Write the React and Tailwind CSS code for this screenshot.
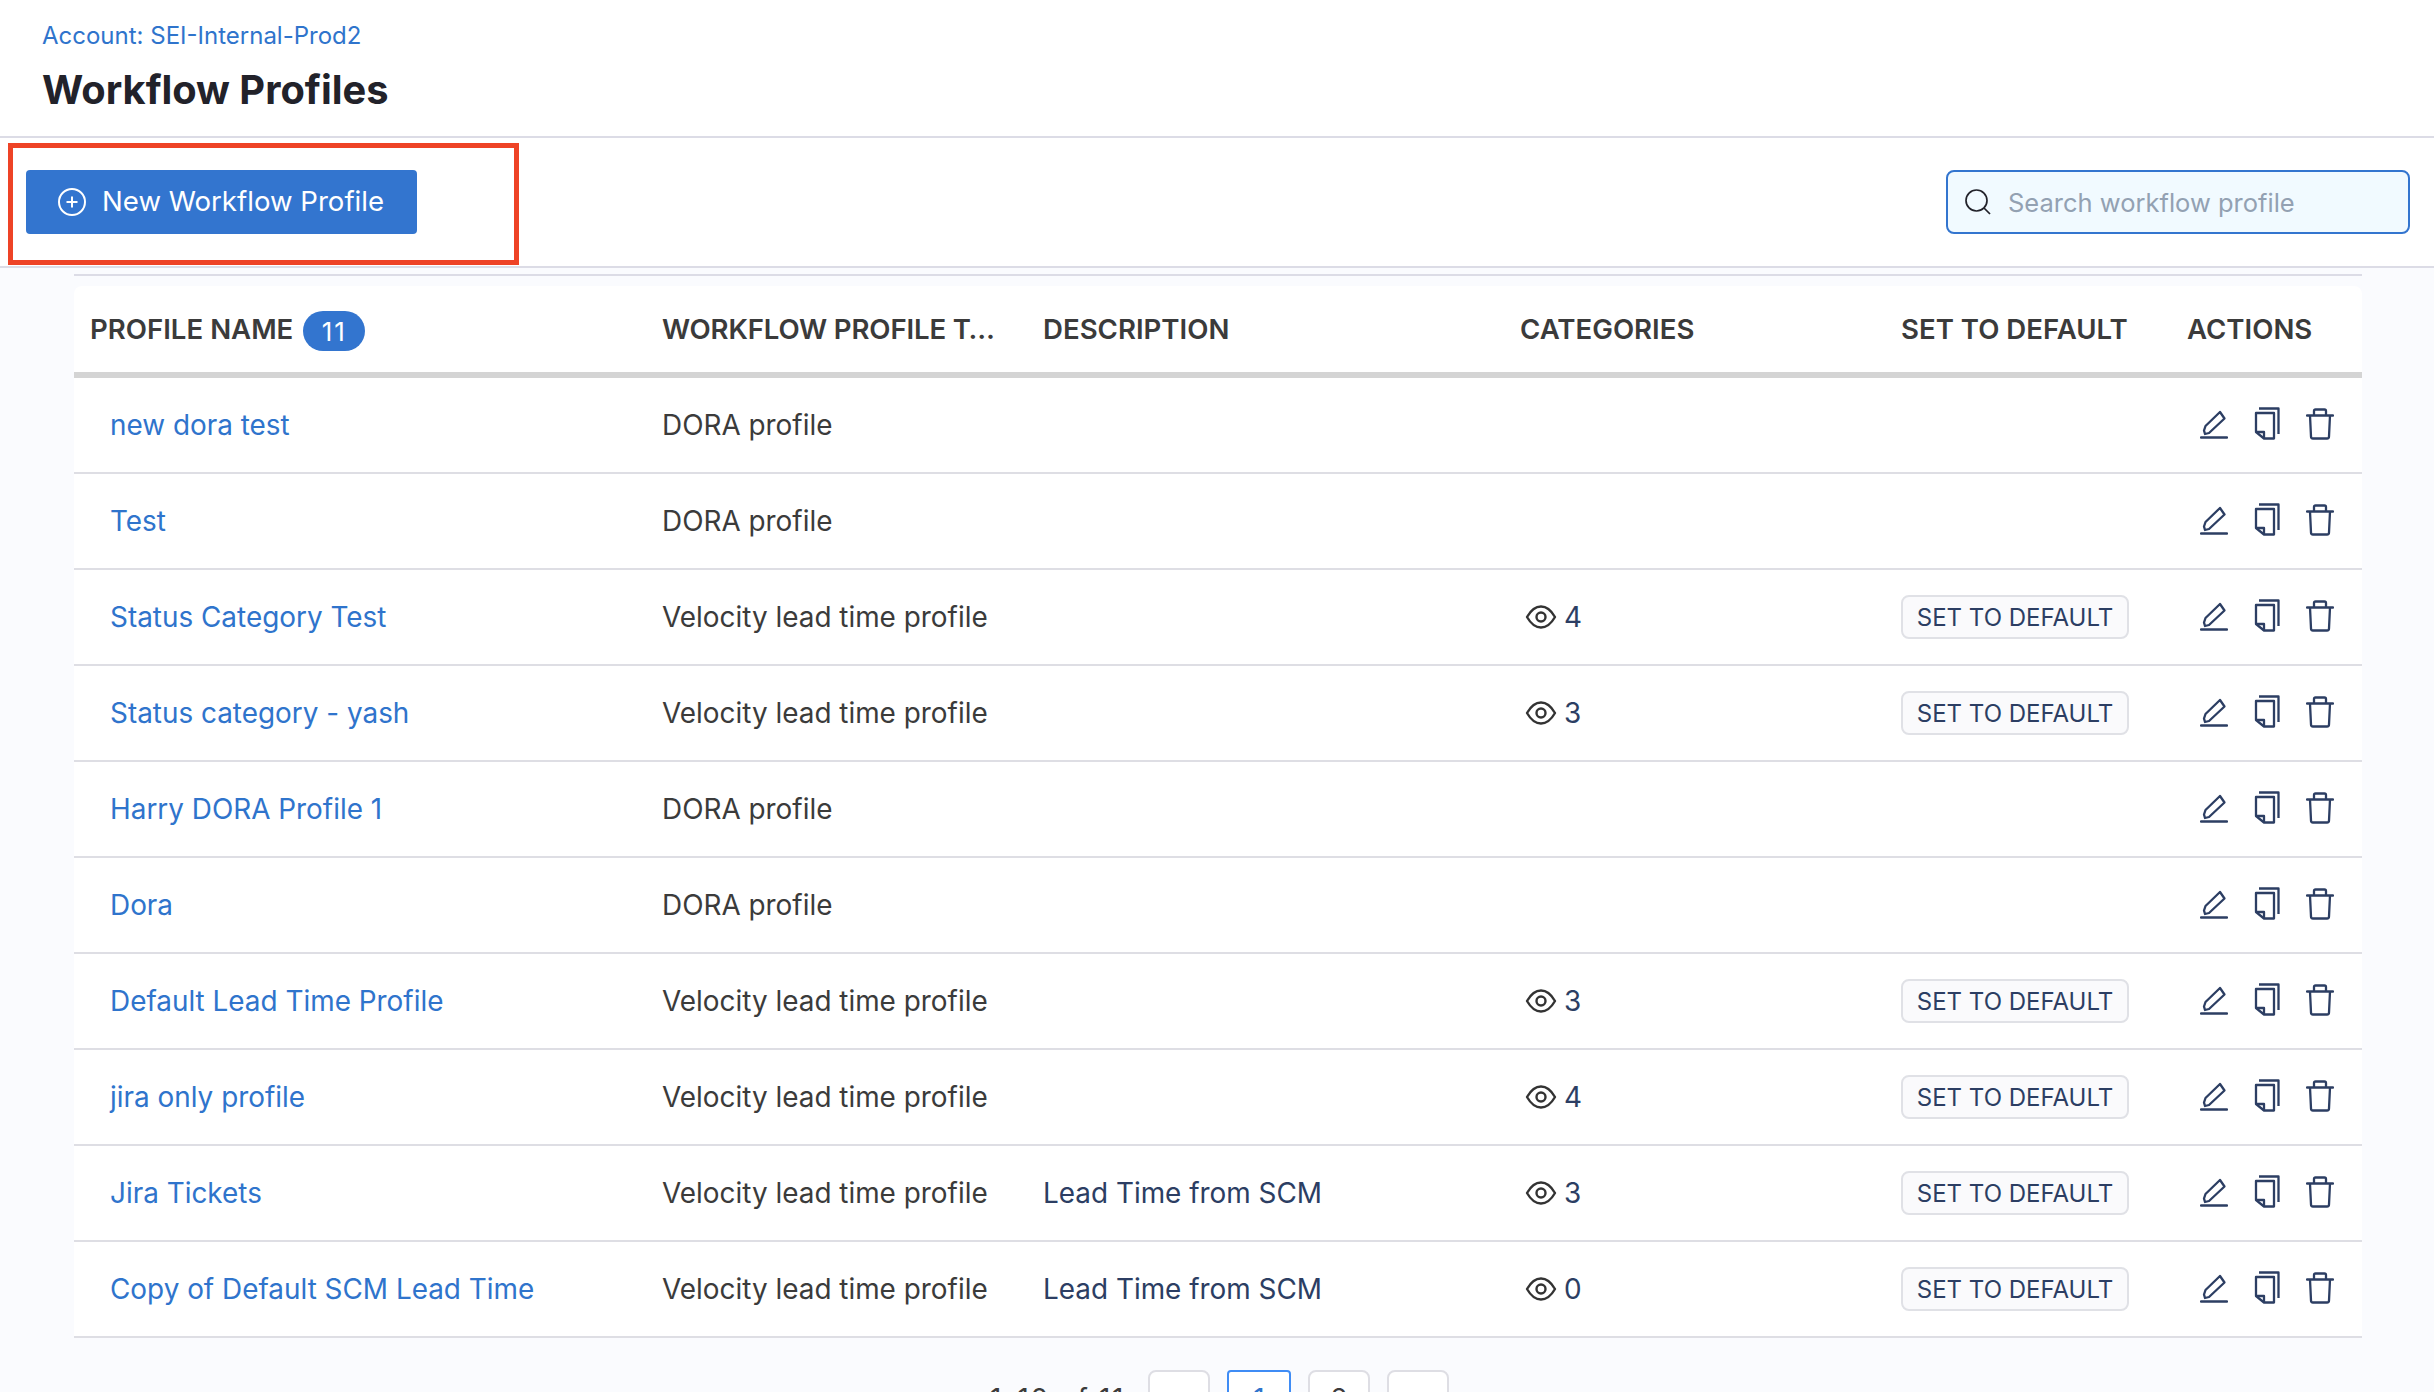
import React from 'react';

const rows = [
  { name: 'new dora test', type: 'DORA profile' },
  { name: 'Test', type: 'DORA profile' },
  { name: 'Status Category Test', type: 'Velocity lead time profile', cat: 4 },
  { name: 'Status category - yash', type: 'Velocity lead time profile', cat: 3 },
  { name: 'Harry DORA Profile 1', type: 'DORA profile' },
  { name: 'Dora', type: 'DORA profile' },
  { name: 'Default Lead Time Profile', type: 'Velocity lead time profile', cat: 3 },
  { name: 'jira only profile', type: 'Velocity lead time profile', cat: 4 },
  { name: 'Jira Tickets', type: 'Velocity lead time profile', desc: 'Lead Time from SCM', cat: 3 },
  { name: 'Copy of Default SCM Lead Time', type: 'Velocity lead time profile', desc: 'Lead Time from SCM', cat: 0 },
];

const cols = 'grid grid-cols-[572px_381px_477px_381px_286px_191px] items-center';

function PlusCircle() {
  return (
    <svg width="30" height="30" viewBox="0 0 30 30" fill="none" stroke="white" strokeWidth="2" className="shrink-0">
      <circle cx="15" cy="15" r="13" />
      <path d="M15 9.5v11M9.5 15h11" />
    </svg>
  );
}

function SearchIcon() {
  return (
    <svg width="28" height="28" viewBox="0 0 28 28" fill="none" stroke="#22222a" strokeWidth="1.7" className="shrink-0">
      <circle cx="12.5" cy="12.5" r="10.5" />
      <path d="M20 20l6 6" />
    </svg>
  );
}

function EyeIcon() {
  return (
    <svg width="32" height="26" viewBox="0 0 32 26" fill="none" stroke="#333333" strokeWidth="2.4" className="mb-[2px] shrink-0">
      <path d="M2 13C6 6 10.500 2.500 16 2.500S26 6 30 13c-4 7-8.500 10.500-14 10.500S6 20 2 13z" strokeLinejoin="round" />
      <circle cx="16" cy="13" r="4.500" />
    </svg>
  );
}

function EditIcon() {
  return (
    <svg width="28" height="30" viewBox="0 0 28 30" fill="none" stroke="#2c3e63" strokeWidth="2.3" strokeLinejoin="round">
      <path d="M4 21.500L5 25l4-1L24.500 9.500 20 3 5.500 17z" />
      <path d="M1 28.500h26" strokeLinecap="round" />
    </svg>
  );
}

function CopyIcon() {
  return (
    <svg width="26" height="34" viewBox="0 0 26 34" fill="none" stroke="#2c3e63" strokeWidth="2.3" strokeLinejoin="round">
      <path d="M5 1.500h19.500V27" />
      <path d="M10 31.500H20V6H2v19z" />
      <path d="M3 25h7v6.500" />
    </svg>
  );
}

function TrashIcon() {
  return (
    <svg width="28" height="32" viewBox="0 0 28 32" fill="none" stroke="#2c3e63" strokeWidth="2.3" strokeLinejoin="round">
      <path d="M1 7.500h26" strokeLinecap="round" />
      <path d="M4 7.500l1 21c0 1 1 2 2 2h14c1 0 2-1 2-2l1-21" />
      <path d="M8 7.500V3c0-1 .5-1.500 1.500-1.500h9c1 0 1.500.5 1.500 1.500v4.500" />
    </svg>
  );
}

function TableRow({ row }) {
  return (
    <div className={`${cols} h-[96px] border-b-2 border-[#dedee4] bg-white text-[27.900px] text-[#3b3b3b]`}>
      <div className="pt-[2px] pl-9 text-[#2f74cc]">{row.name}</div>
      <div className="pt-[2px] pl-4">{row.type}</div>
      <div className="pt-[2px] pl-4 text-[#2c3e63]">{row.desc}</div>
      <div className="pt-[2px] pl-[21px]">
        {row.cat !== undefined && (
          <div className="flex items-center gap-[7px] text-[#2c3e63]">
            <EyeIcon />
            <span>{row.cat}</span>
          </div>
        )}
      </div>
      <div className="pl-4">
        {row.cat !== undefined && (
          <button className="flex h-[44px] w-[228px] items-center justify-center rounded-lg border-2 border-[#e0e1e6] bg-[#fafafc] pt-[1px] text-[24px] text-[#2c3e63]">
            SET TO DEFAULT
          </button>
        )}
      </div>
      <div className="flex items-center gap-[26px] pb-[2px] pl-[29px]">
        <EditIcon />
        <CopyIcon />
        <TrashIcon />
      </div>
    </div>
  );
}

export default function App() {
  return (
    <div className="relative h-[1392px] overflow-hidden bg-[#fafbfe] font-['Inter',sans-serif]">
      <header className="h-[138px] border-b-2 border-[#dcdce6] bg-white px-[42px] pt-5">
        <div className="text-[24px] leading-[32px] text-[#2f74cc]">Account: SEI-Internal-Prod2</div>
        <h1 className="mt-[11px] text-[39.800px] leading-[54px] font-bold text-[#22222a]">Workflow Profiles</h1>
      </header>

      <div className="flex h-[130px] items-center justify-between border-b-2 border-[#dcdce6] bg-white pr-6 pl-[26px]">
        <button className="flex h-[64px] w-[391px] items-center gap-[15px] rounded bg-[#3375cf] pl-[31px] text-[27.600px] text-white">
          <PlusCircle />
          New Workflow Profile
        </button>
        <div className="flex h-[64px] w-[464px] items-center gap-4 rounded-lg border-2 border-[#3375cf] bg-[#f1faff] pl-4">
          <SearchIcon />
          <span className="pt-[2px] text-[25.500px] text-[#93a1b2]">Search workflow profile</span>
        </div>
      </div>

      <div className="absolute top-[143px] left-2 h-[122px] w-[511px] border-[5px] border-[#ee4326]" />

      <main className="mx-[74px] mt-[6px] w-[2288px]">
        <div className="h-[2px] bg-[#dcdce6]" />
        <div className={`${cols} mt-[10px] h-[92px] rounded-t-lg border-b-[6px] border-[#d4d4d4] bg-white text-[27.600px] font-semibold text-[#3b3b3b]`}>
          <div className="flex items-center gap-[10px] pt-[2px] pl-4">
            PROFILE NAME
            <span className="mt-[2px] flex h-10 w-[62px] items-center justify-center rounded-full bg-[#3375cf] text-[26px] font-normal tracking-[2px] text-white">11</span>
          </div>
          <div className="truncate pt-[2px] pl-4 tracking-[-0.15px]">WORKFLOW PROFILE T…</div>
          <div className="pt-[2px] pl-4">DESCRIPTION</div>
          <div className="pt-[2px] pl-4">CATEGORIES</div>
          <div className="pt-[2px] pl-4">SET TO DEFAULT</div>
          <div className="pt-[2px] pl-4">ACTIONS</div>
        </div>
        {rows.map((row) => (
          <TableRow key={row.name} row={row} />
        ))}

        <div className="mt-[32px] flex items-start justify-center gap-[17px] pl-[3px] text-[28px] text-[#3b3b3b]">
          <span className="mt-2 mr-[6px] tracking-[1.6px]">1-10 of 11</span>
          <button className="flex h-[64px] w-[62px] items-center justify-center rounded-lg border-2 border-[#dedee4] bg-white pb-[6px]">‹</button>
          <button className="flex h-[64px] w-[64px] items-center justify-center rounded border-2 border-[#3f8cf5] bg-white pb-[6px] text-[#2f74cc]">1</button>
          <button className="flex h-[64px] w-[62px] items-center justify-center rounded-lg border-2 border-[#dedee4] bg-white pb-[6px]">2</button>
          <button className="flex h-[64px] w-[62px] items-center justify-center rounded-lg border-2 border-[#dedee4] bg-white pb-[6px]">›</button>
        </div>
      </main>
    </div>
  );
}
